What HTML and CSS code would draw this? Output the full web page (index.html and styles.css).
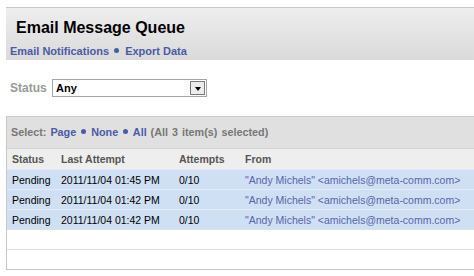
FILE: index.html
```html
<!DOCTYPE html>
<html lang="en">
<head>
  <meta charset="UTF-8">
  <title>Email Message Queue</title>
  <link rel="stylesheet" href="styles.css">
</head>
<body>
  <div class="page-header">
    <h1>Email Message Queue</h1>
    <div class="header-links">
      <a href="#">Email Notifications</a> <span class="dot"></span> <a href="#">Export Data</a>
    </div>
  </div>

  <div class="filters">
    <label class="filter-label" for="status">Status</label>
    <div class="select-box">
      <span class="select-value">Any</span>
      <span class="select-btn"><span class="arrow"></span></span>
    </div>
  </div>

  <div class="queue">
    <div class="select-bar">
      Select: <a href="#">Page</a> <span class="dot"></span> <a href="#">None</a> <span class="dot"></span> <a href="#">All</a> (All 3 item(s) selected)
    </div>
    <table class="queue-table">
      <thead>
        <tr>
          <th class="col-status">Status</th>
          <th class="col-last">Last Attempt</th>
          <th class="col-attempts">Attempts</th>
          <th>From</th>
        </tr>
      </thead>
      <tbody>
        <tr class="selected">
          <td>Pending</td>
          <td>2011/11/04 01:45 PM</td>
          <td>0/10</td>
          <td class="from">"Andy Michels" &lt;amichels@meta-comm.com&gt;</td>
        </tr>
        <tr class="selected">
          <td>Pending</td>
          <td>2011/11/04 01:42 PM</td>
          <td>0/10</td>
          <td class="from">"Andy Michels" &lt;amichels@meta-comm.com&gt;</td>
        </tr>
        <tr class="selected">
          <td>Pending</td>
          <td>2011/11/04 01:42 PM</td>
          <td>0/10</td>
          <td class="from">"Andy Michels" &lt;amichels@meta-comm.com&gt;</td>
        </tr>
        <tr class="empty"><td colspan="4"></td></tr>
        <tr class="empty"><td colspan="4"></td></tr>
      </tbody>
    </table>
  </div>
</body>
</html>
```

FILE: styles.css
```css
body {
  font-family: "Liberation Sans", Arial, sans-serif;
  margin: 0;
  padding: 7px 0 0 6px;
  background-color: white;
  font-size: 10.5px;
}

a {
  color: #4a5ba6;
  text-decoration: none;
}

.dot {
  display: inline-block;
  width: 5px;
  height: 5px;
  border-radius: 50%;
  background-color: #4a5ba6;
  vertical-align: 2px;
  margin: 0 1px;
}

.page-header {
  border-top: 1px solid #c8c8c8;
  background: linear-gradient(#eeeeee, #dadada);
  height: 52px;
  padding-left: 4px;
}

.page-header h1 {
  margin: 0;
  padding: 10px 0 0 6px;
  font-size: 16px;
  line-height: 20px;
  color: #000;
}

.header-links {
  margin-top: 7px;
  font-weight: bold;
  font-size: 11px;
}

.header-links .dot {
  margin: 0 3px 0 2px;
}

.filters {
  display: flex;
  align-items: center;
  padding: 19px 0 0 4px;
  height: 18px;
}

.filter-label {
  color: #999;
  font-size: 12px;
  font-weight: bold;
  width: 42px;
}

.select-box {
  display: flex;
  width: 153px;
  height: 16px;
  border: 1px solid #a5a5a5;
  align-items: center;
}

.select-value {
  flex: 1;
  font-weight: bold;
  font-size: 11px;
  padding-left: 3px;
  color: #000;
}

.select-btn {
  width: 13px;
  height: 12px;
  border: 1px solid #7a7a7a;
  margin-right: 1px;
  background: #ececec;
  display: flex;
  align-items: center;
  justify-content: center;
}

.arrow {
  border-left: 3px solid transparent;
  border-right: 3px solid transparent;
  border-top: 4px solid #000;
  margin-top: 1px;
}

.queue {
  margin-top: 19px;
  border-left: 1px solid #c8c8c8;
}

.select-bar {
  background-color: #e0e0e0;
  border-top: 1px solid #cccccc;
  height: 31px;
  line-height: 31px;
  padding-left: 4px;
  color: #777;
  font-weight: bold;
  font-size: 10.8px;
  word-spacing: 1px;
}

.queue-table {
  width: 100%;
  border-collapse: collapse;
}

.queue-table th {
  background-color: #eeeeee;
  color: #555;
  text-align: left;
  font-weight: bold;
  height: 20px;
  padding: 0 0 0 5px;
  border-top: 1px solid #d4d4d4;
}

.queue-table td {
  height: 19px;
  padding: 0 0 0 5px;
  color: #000;
  border-top: 1px solid #dcdcdc;
  white-space: nowrap;
}

.col-status {
  width: 44px;
}

.col-last {
  width: 113px;
}

.col-attempts {
  width: 61px;
}

.queue-table tr.selected td {
  background-color: #cfe0f5;
  border-top: 1px solid #e2ebf7;
}

.queue-table td.from {
  color: #5a64a8;
}

.queue-table tr.empty td {
  border-top: 1px solid #e0e0e0;
}

.queue-table tr.empty:last-child td {
  border-bottom: 1px solid #c8c8c8;
}
```
